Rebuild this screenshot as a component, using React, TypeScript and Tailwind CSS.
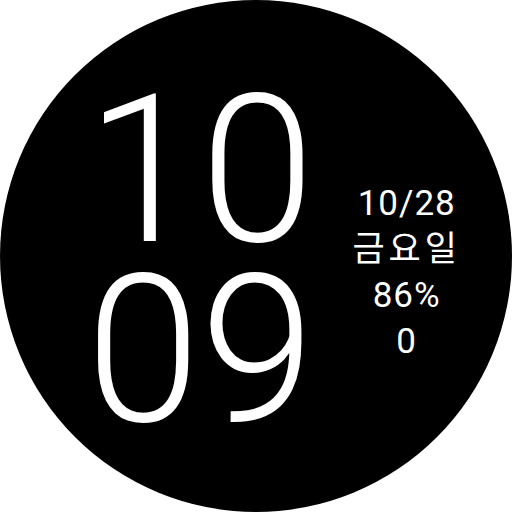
export default function App() {
  return (
    <div className="w-[512px] h-[512px] bg-white">
      <div className="w-[512px] h-[512px] rounded-full bg-black flex items-center text-white font-['Roboto','Noto_Sans_CJK_KR',sans-serif]">
        <div className="pl-[86px] mt-[10px] flex flex-col font-light text-[206px] leading-[180px]">
          <span>10</span>
          <span>09</span>
        </div>
        <div className="ml-auto mr-[51px] mt-[34px] flex flex-col items-center text-[35px] leading-[46px] tracking-[1px]">
          <span>10/28</span>
          <span className="tracking-[4px]">금요일</span>
          <span>86%</span>
          <span>0</span>
        </div>
      </div>
    </div>
  );
}
